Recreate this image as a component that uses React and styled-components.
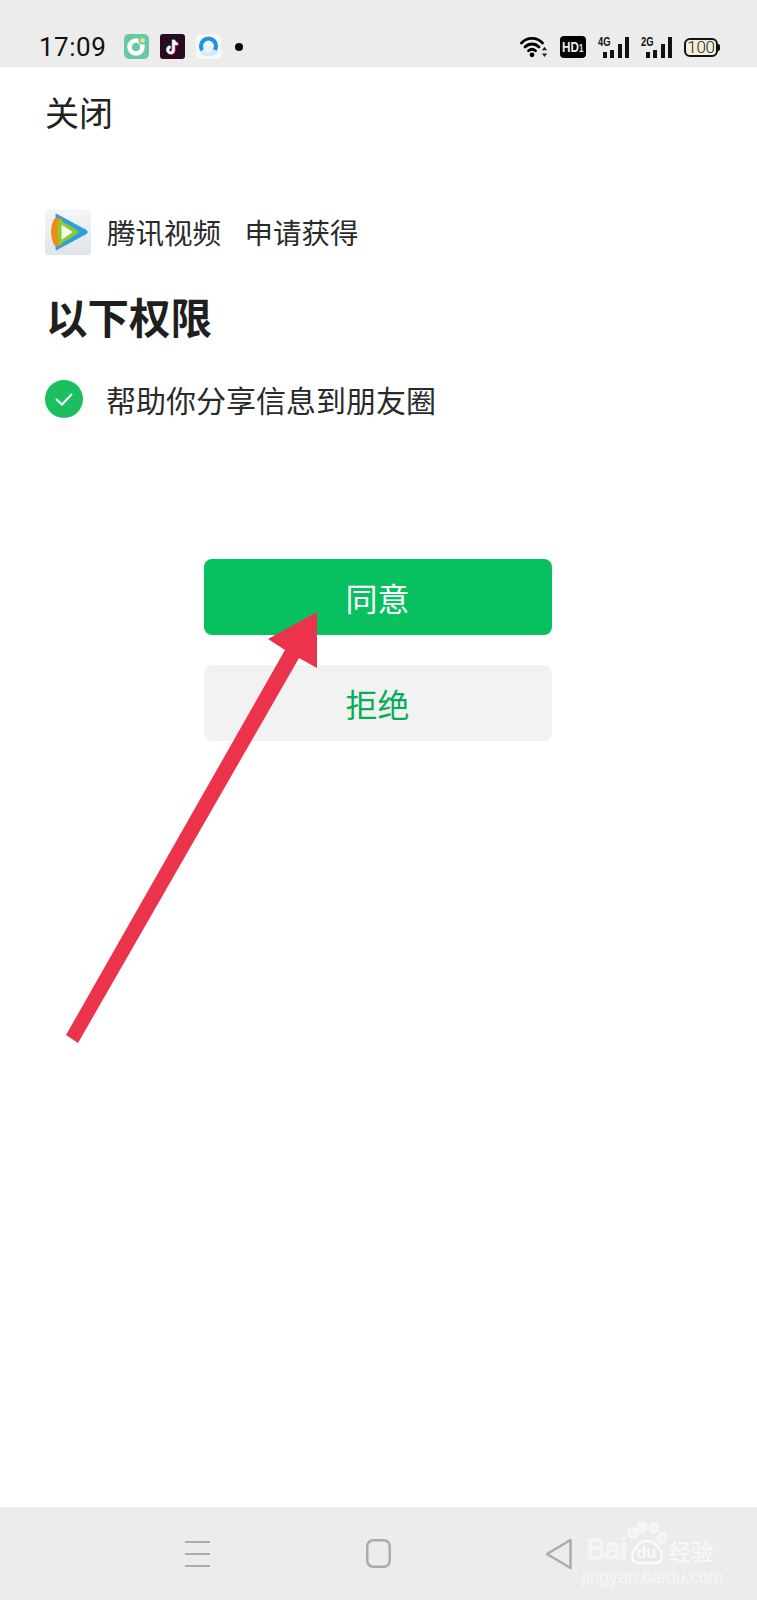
import React from 'react';
import styled, { createGlobalStyle } from 'styled-components';

const GlobalStyle = createGlobalStyle`
  html, body {
    margin: 0;
    padding: 0;
    background: #fff;
  }
  * {
    box-sizing: border-box;
  }
`;

const Screen = styled.div`
  position: relative;
  width: 757px;
  height: 1600px;
  display: flex;
  flex-direction: column;
  overflow: hidden;
  background: #fff;
  color: #1a1a1a;
  font-family: "Noto Sans CJK SC", "Noto Sans", sans-serif;
`;

const StatusBar = styled.div`
  height: 67px;
  flex: none;
  background: #ececec;
  display: flex;
  align-items: flex-end;
  justify-content: space-between;
  padding: 0 37px 8px 39px;
`;

const StatusLeft = styled.div`
  display: flex;
  align-items: center;
  height: 25px;
`;

const Time = styled.span`
  font-family: Roboto, sans-serif;
  font-size: 26px;
  line-height: 25px;
  width: 85px;
  margin-top: 2px;
  letter-spacing: 0.5px;
  color: #111;
`;

const AppIcons = styled.div`
  display: flex;
  align-items: center;
  gap: 11px;

  svg {
    display: block;
  }
`;

const Dot = styled.span`
  width: 8px;
  height: 8px;
  margin-left: 3px;
  border-radius: 50%;
  background: #000;
`;

const StatusRight = styled.div`
  display: flex;
  align-items: center;
  gap: 12px;
  height: 24px;

  svg {
    display: block;
  }
`;

const HdBadge = styled.span`
  width: 26px;
  height: 22px;
  border-radius: 4px;
  background: #000;
  color: #ececec;
  font-family: "Liberation Sans", sans-serif;
  font-size: 15px;
  font-weight: 700;
  line-height: 22px;
  text-align: center;
  white-space: nowrap;

  span {
    display: inline-block;
    transform: scaleX(0.78);
    transform-origin: center;
    margin: 0 -3px;
  }

  small {
    font-size: 10px;
  }
`;

const Signal = styled.div`
  position: relative;
  width: 31px;
  height: 22px;
  display: flex;
  align-items: flex-end;
  justify-content: flex-end;
  gap: 3.5px;
`;

const SignalLabel = styled.span`
  position: absolute;
  left: 0;
  top: -1px;
  font-family: "Liberation Sans", sans-serif;
  font-size: 13px;
  font-weight: 700;
  line-height: 13px;
  color: #111;
  transform: scaleX(0.72);
  transform-origin: left top;
`;

const SignalBar = styled.span`
  width: 4px;
  height: ${(p) => p.$h}px;
  background: #111;
`;

const Battery = styled.div`
  position: relative;
  width: 34px;
  height: 19px;
  margin-right: 2px;
  border: 2px solid #111;
  border-radius: 6px;
  background: #f5eeda;
  font-family: Roboto, sans-serif;
  font-size: 17px;
  font-weight: 300;
  line-height: 15px;
  text-align: center;
  letter-spacing: -0.3px;
  color: #222;

  &::after {
    content: '';
    position: absolute;
    right: -4px;
    top: 4px;
    width: 2px;
    height: 7px;
    background: #111;
    border-radius: 0 2px 2px 0;
  }
`;

const Content = styled.div`
  flex: 1;
  display: flex;
  flex-direction: column;
  padding: 0 45px;
`;

const CloseLink = styled.div`
  margin-top: 23px;
  font-size: 34px;
  line-height: 44px;
  color: #222;
`;

const AppRow = styled.div`
  display: flex;
  align-items: center;
  margin-top: 75px;
  gap: 16px;
`;

const AppLogo = styled.div`
  width: 46px;
  height: 46px;
  border-radius: 3px;
  background: linear-gradient(180deg, #f4f6f8, #dfe5ea);
  display: flex;
  align-items: center;
  justify-content: center;
`;

const AppText = styled.span`
  font-size: 28.5px;
  line-height: 46px;
  color: #2a2a2a;
  white-space: pre;
  word-spacing: -0.5px;
`;

const Heading = styled.h1`
  margin: 33px 0 0 1px;
  font-size: 41.5px;
  line-height: 56px;
  font-weight: 700;
  color: #1f1f1f;
`;

const PermissionRow = styled.div`
  display: flex;
  align-items: center;
  gap: 23px;
  margin-top: 36px;
`;

const CheckCircle = styled.div`
  width: 38px;
  height: 38px;
  flex: none;
  border-radius: 50%;
  background: #1bbf5f;
  display: flex;
  align-items: center;
  justify-content: center;
`;

const PermissionText = styled.span`
  font-size: 30px;
  line-height: 38px;
  color: #2a2a2a;
`;

const Actions = styled.div`
  display: flex;
  flex-direction: column;
  align-items: center;
  gap: 30px;
  margin-top: 141px;
  margin-left: -2px;
`;

const ActionButton = styled.button`
  width: 348px;
  height: 76px;
  border: none;
  border-radius: 8px;
  background: ${(p) => (p.$primary ? '#07c160' : '#f2f2f2')};
  color: ${(p) => (p.$primary ? '#fff' : '#06ad56')};
  font-family: inherit;
  font-size: 32px;
  padding: 0;
`;

const NavBar = styled.div`
  height: 93px;
  flex: none;
  background: #ececec;
  display: grid;
  grid-template-columns: 181px 179px 27px;
  justify-content: start;
  align-items: center;
  padding: 0 0 0 185px;

  svg {
    display: block;
  }
`;

const ArrowOverlay = styled.svg`
  position: absolute;
  left: 0;
  top: 0;
  pointer-events: none;
`;

const Watermark = styled.div`
  position: absolute;
  left: 581px;
  top: 1522px;
  width: 136px;
  height: 76px;
  color: #fafafa;
  font-family: "Liberation Sans", sans-serif;
`;

const MarkBai = styled.span`
  position: absolute;
  left: 5px;
  top: 12px;
  font-size: 29px;
  line-height: 30px;
  -webkit-text-stroke: 0.8px #fafafa;
  color: #f3f3f3;
  letter-spacing: -0.5px;
`;

const MarkDu = styled.span`
  position: absolute;
  left: 55px;
  top: 22px;
  font-size: 17px;
  line-height: 18px;
  font-weight: 700;
  letter-spacing: -0.5px;
  color: #fafafa;
`;

const MarkCn = styled.span`
  position: absolute;
  left: 88px;
  top: 15px;
  font-family: "Noto Sans CJK SC", sans-serif;
  font-size: 22px;
  line-height: 26px;
  white-space: nowrap;
`;

const MarkUrl = styled.span`
  position: absolute;
  left: 1px;
  top: 45px;
  font-size: 17.5px;
  line-height: 20px;
  white-space: nowrap;
  color: #f7f7f7;
`;

const MarkPaw = styled.svg`
  position: absolute;
  left: 44px;
  top: 0;
`;

const SoulIcon = () => (
  <svg width="25" height="25" viewBox="0 0 25 25">
    <rect width="25" height="25" rx="5" fill="#66c9a4" />
    <circle cx="12" cy="13" r="6.5" fill="none" stroke="#fff" strokeWidth="4.5" />
    <circle cx="18.5" cy="6.5" r="4" fill="#66c9a4" />
    <circle cx="18.5" cy="6.5" r="2.4" fill="#f5e27a" />
  </svg>
);

const TikTokIcon = () => (
  <svg width="25" height="25" viewBox="0 0 25 25">
    <rect width="25" height="25" rx="3" fill="#2a0a20" />
    <g fill="none" strokeWidth="2.5">
      <path d="M12.900 5.500v10a2.900 2.900 0 1 1-2.900-2.900M12.900 5.500c.3 2.400 1.900 3.900 4.200 4.100" stroke="#25e0e0" />
      <path d="M14.300 6.500v10a2.900 2.900 0 1 1-2.900-2.900M14.300 6.500c.3 2.400 1.900 3.900 4.200 4.100" stroke="#f0285a" />
      <path d="M13.600 6v10a2.900 2.900 0 1 1-2.900-2.900M13.600 6c.3 2.400 1.900 3.900 4.200 4.100" stroke="#fff" />
    </g>
  </svg>
);

const BrowserIcon = () => (
  <svg width="25" height="25" viewBox="0 0 25 25">
    <rect width="25" height="25" rx="5" fill="#f7fafd" />
    <circle cx="12.500" cy="12" r="7.500" fill="none" stroke="#1f93ea" strokeWidth="4.200" />
    <ellipse cx="13" cy="18.500" rx="8.500" ry="3.800" fill="#d5e9f9" />
    <circle cx="11.500" cy="15" r="4" fill="#e8f3fc" />
  </svg>
);

const WifiIcon = () => (
  <svg width="28" height="22" viewBox="0 0 28 22">
    <g fill="none" stroke="#000" strokeWidth="2.800" strokeLinecap="round">
      <path d="M1.500 7C7 .8 17 .8 22.500 7" />
      <path d="M5 11C9 7 15 7 19 11" />
      <path d="M8.500 14.800C11 12.600 13 12.600 15.500 14.800" />
    </g>
    <circle cx="12" cy="18.800" r="2.400" fill="#000" />
    <path d="M24.500 10.800l2.600 3.400h-5.200zM24.500 21l2.600-3.400h-5.200z" fill="#222" />
  </svg>
);

const TencentLogo = () => (
  <svg width="42" height="38" viewBox="0 0 42 38">
    <path
      d="M9 1 L39.500 17.500 Q41 19 39.500 20.500 L9 37 Z"
      fill="#2e9fdc"
      stroke="#2e9fdc"
      strokeWidth="1"
      strokeLinejoin="round"
    />
    <path d="M7 6 Q11 4 15 6 V32 Q11 34 7 32 Q1 19 7 6 Z" fill="#f08a14" />
    <path d="M12 7 L30 17.500 Q32 19 30 20.500 L12 31.500 Q9 19 12 7 Z" fill="#8ccb2c" stroke="#8ccb2c" strokeWidth="1" strokeLinejoin="round" />
    <path d="M15 12.500 L25 19 L15 26 Z" fill="#f4f8ee" stroke="#f4f8ee" strokeWidth="1" strokeLinejoin="round" />
  </svg>
);

const MenuIcon = () => (
  <svg width="25" height="26" viewBox="0 0 25 26">
    <path d="M0 1h25M0 13h25M0 25h25" stroke="#ababab" strokeWidth="2" />
  </svg>
);

const HomeIcon = () => (
  <svg width="25" height="29" viewBox="0 0 25 29">
    <rect x="1.250" y="1.250" width="22.500" height="26.500" rx="6" fill="none" stroke="#ababab" strokeWidth="2.500" />
  </svg>
);

const BackIcon = () => (
  <svg width="27" height="32" viewBox="0 0 27 32">
    <path d="M25.500 2 L2 16 L25.500 30 Z" fill="none" stroke="#ababab" strokeWidth="2.500" strokeLinejoin="round" />
  </svg>
);

const App = () => (
  <Screen>
    <GlobalStyle />
    <StatusBar>
      <StatusLeft>
        <Time>17:09</Time>
        <AppIcons>
          <SoulIcon />
          <TikTokIcon />
          <BrowserIcon />
          <Dot />
        </AppIcons>
      </StatusLeft>
      <StatusRight>
        <WifiIcon />
        <HdBadge>
          <span>
            HD<small>1</small>
          </span>
        </HdBadge>
        <Signal>
          <SignalLabel>4G</SignalLabel>
          <SignalBar $h={6} />
          <SignalBar $h={8} />
          <SignalBar $h={14} />
          <SignalBar $h={21} />
        </Signal>
        <Signal>
          <SignalLabel>2G</SignalLabel>
          <SignalBar $h={6} />
          <SignalBar $h={8} />
          <SignalBar $h={14} />
          <SignalBar $h={21} />
        </Signal>
        <Battery>100</Battery>
      </StatusRight>
    </StatusBar>

    <Content>
      <CloseLink>关闭</CloseLink>
      <AppRow>
        <AppLogo>
          <TencentLogo />
        </AppLogo>
        <AppText>腾讯视频    申请获得</AppText>
      </AppRow>
      <Heading>以下权限</Heading>
      <PermissionRow>
        <CheckCircle>
          <svg width="20" height="16" viewBox="0 0 20 16">
            <path d="M2 8l6 5.500L18 3" fill="none" stroke="#fff" strokeWidth="2" />
          </svg>
        </CheckCircle>
        <PermissionText>帮助你分享信息到朋友圈</PermissionText>
      </PermissionRow>
      <Actions>
        <ActionButton $primary>同意</ActionButton>
        <ActionButton>拒绝</ActionButton>
      </Actions>
    </Content>

    <NavBar>
      <MenuIcon />
      <HomeIcon />
      <BackIcon />
    </NavBar>

    <ArrowOverlay width="757" height="1600" viewBox="0 0 757 1600">
      <path d="M66 1035 L285 650 L268 639 L317 612 L317 668 L299 658 L78 1043 Z" fill="#eb344c" />
    </ArrowOverlay>

    <Watermark>
      <MarkPaw width="42" height="44" viewBox="0 0 42 44">
        <g fill="#f3f3f3" stroke="#fafafa" strokeWidth="1.500">
          <ellipse cx="8" cy="11" rx="4.500" ry="5.500" transform="rotate(-25 8 11)" />
          <ellipse cx="17" cy="5" rx="4.200" ry="5" />
          <ellipse cx="29" cy="6" rx="4.200" ry="5" />
          <ellipse cx="37" cy="16" rx="4.500" ry="5.500" transform="rotate(25 37 16)" />
        </g>
        <path
          d="M8 38c-3-9 7-19 14-19s18 10 14 19c-2 4-8 3-14 3s-12 1-14-3z"
          fill="#e9e9e9"
          stroke="#fafafa"
          strokeWidth="2.500"
        />
      </MarkPaw>
      <MarkBai>Bai</MarkBai>
      <MarkDu>du</MarkDu>
      <MarkCn>经验</MarkCn>
      <MarkUrl>jingyan.baidu.com</MarkUrl>
    </Watermark>
  </Screen>
);

export default App;
